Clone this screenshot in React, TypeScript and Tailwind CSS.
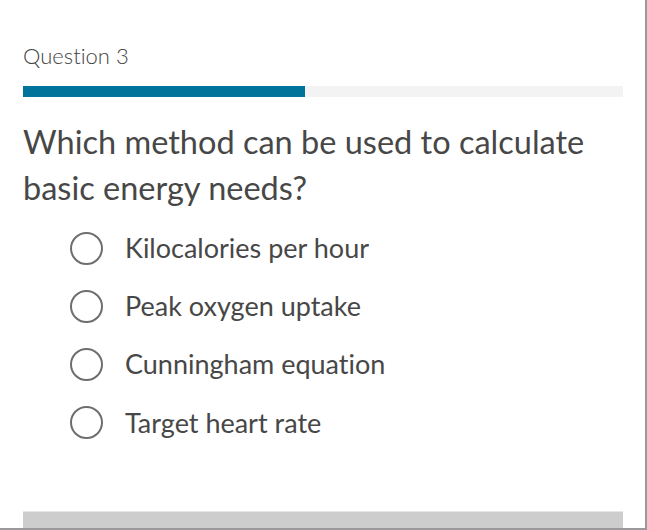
export default function App() {
  const options = [
    "Kilocalories per hour",
    "Peak oxygen uptake",
    "Cunningham equation",
    "Target heart rate",
  ];

  return (
    <div
      className="w-[647px] h-[530px] bg-white border-r-2 border-b-2 border-[#9a9a9a] flex flex-col overflow-hidden [font-variant-ligatures:none]"
      style={{ fontFamily: "Lato, 'Open Sans', sans-serif" }}
    >
      <div className="pl-[23px] pr-[22px] flex flex-col flex-1">
        <h2 className="mt-[42px] text-[22px] leading-[28px] text-[#444] font-light">Question 3</h2>

        {/* progress */}
        <div className="mt-[16px] h-[11px] bg-[#f3f3f3] flex">
          <div className="w-[282px] bg-[#00739a]" />
        </div>

        <p className="mt-[22px] text-[32.5px] leading-[46px] text-[#474747]">
          Which method can be used to calculate basic energy needs?
        </p>

        <ul className="mt-[21px] pl-[47px] flex flex-col gap-[26.3px]">
          {options.map((o) => (
            <li key={o} className="flex items-center h-[32px]">
              <span className="w-[33px] h-[33px] rounded-full border-[2.5px] border-[#6e6e6e] shrink-0" />
              <span className="ml-[22px] text-[27px] text-[#474747]">{o}</span>
            </li>
          ))}
        </ul>

        <div className="mt-auto h-[17px] bg-[#cdcdcd] border-t border-[#e6e6e6]" />
      </div>
    </div>
  );
}
